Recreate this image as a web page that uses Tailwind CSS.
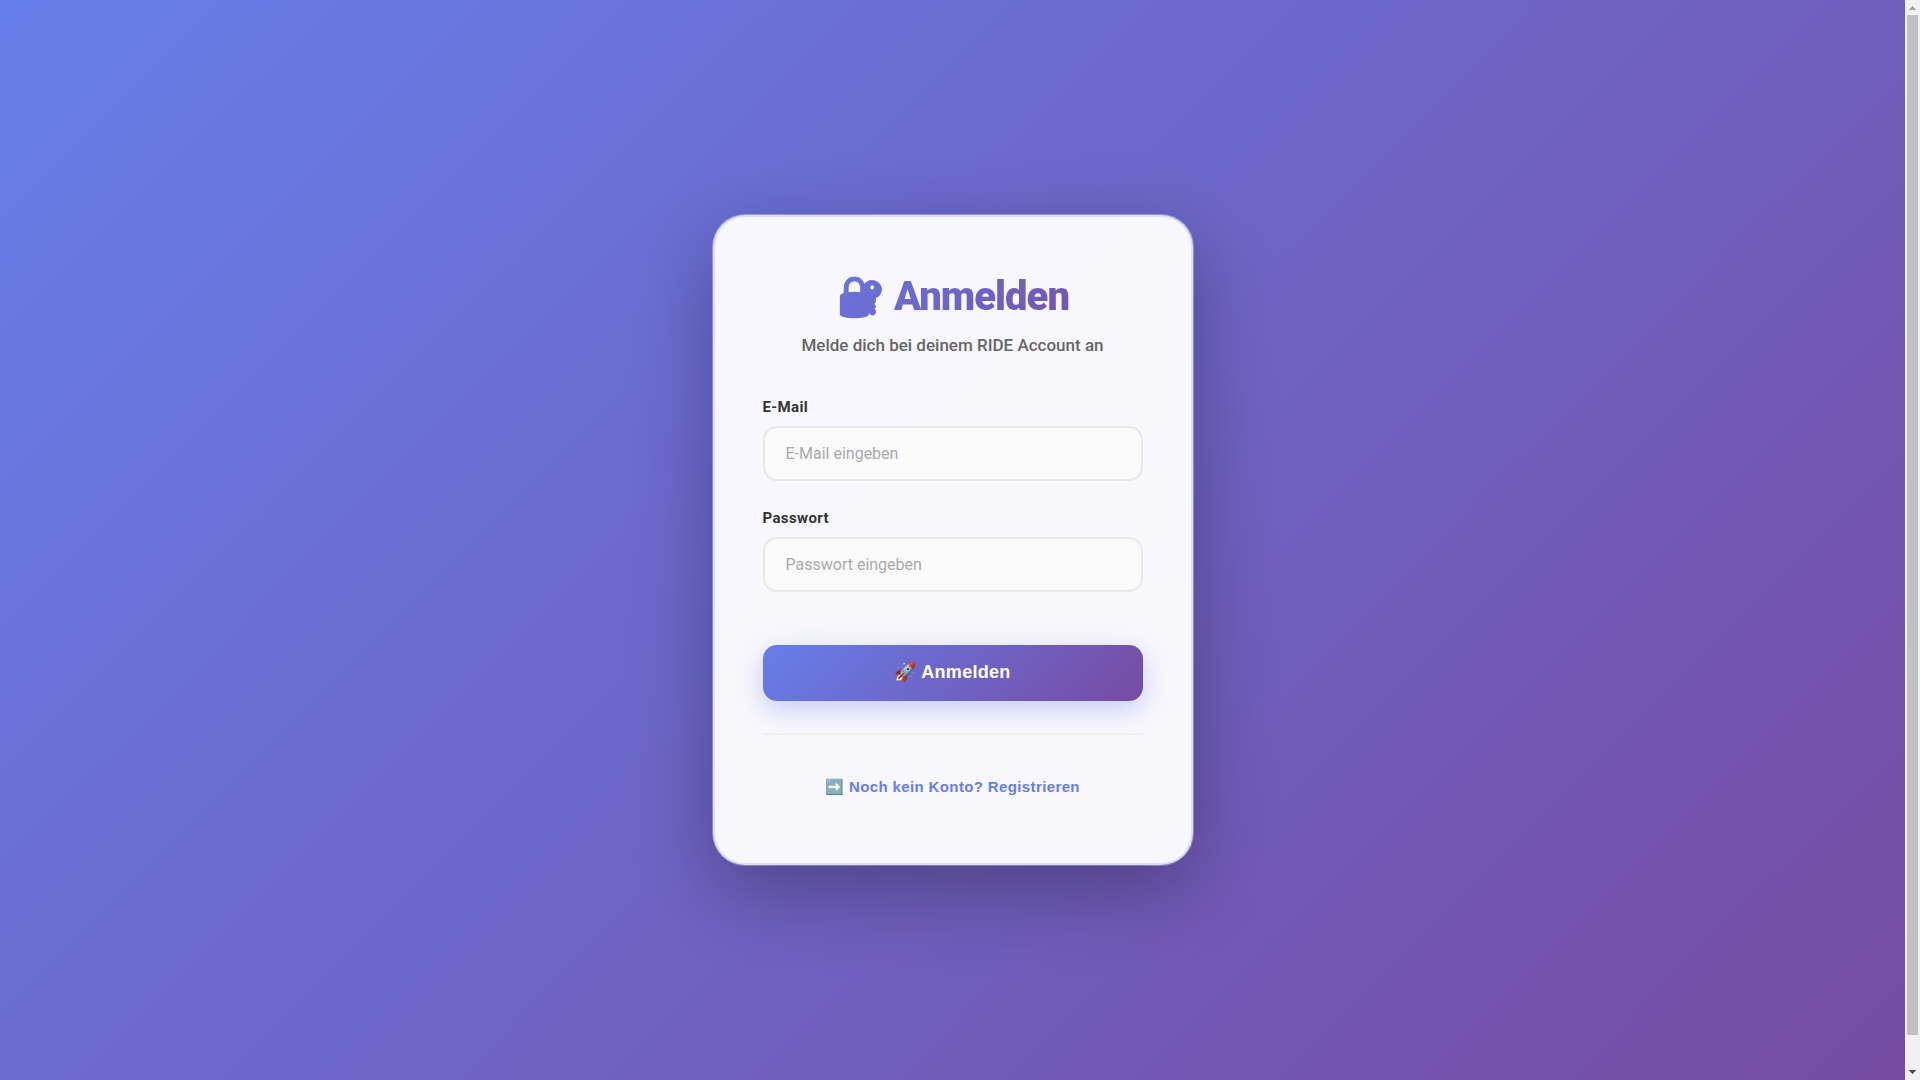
<!DOCTYPE html>
<html lang="de">
  <head>
    <meta charset="UTF-8" />
    <meta name="viewport" content="width=device-width, initial-scale=1.0" />
    <title>Anmelden</title>
    <script src="https://cdn.jsdelivr.net/npm/@tailwindcss/browser@4"></script>
  </head>
  <body class="h-screen overflow-hidden flex bg-[#f1f1f1] font-['Roboto',sans-serif]">
    <main
      class="flex-1 flex items-center justify-center p-5 bg-[linear-gradient(135deg,#667eea_0%,#764ba2_100%)]"
    >
      <div
        class="w-full max-w-[480px] bg-white/95 border-2 border-[#667eea]/20 rounded-[32px] px-12 pt-[50px] pb-14 shadow-[0_25px_80px_rgba(0,0,0,0.3),0_0_0_1px_rgba(255,255,255,0.4)]"
      >
        <h1
          class="text-center text-[40px] leading-[60px] font-black tracking-[-1px] text-transparent bg-clip-text bg-[linear-gradient(135deg,#667eea_0%,#764ba2_100%)]"
        >
          🔐 Anmelden
        </h1>
        <p class="mt-[6px] text-center text-[17px] leading-6 font-medium text-[#666]">
          Melde dich bei deinem RIDE Account an
        </p>

        <form class="mt-[38px]">
          <label for="email" class="block text-[15px] leading-6 font-bold tracking-wide text-[#333]">E-Mail</label>
          <input
            type="email"
            id="email"
            placeholder="E-Mail eingeben"
            class="mt-[7px] w-full h-[55px] px-[21px] text-base border-2 border-[#e8e8e8] rounded-[14px] bg-[#fafafa] placeholder-[#aaa]"
          />

          <label for="password" class="block mt-[25px] text-[15px] leading-6 font-bold tracking-wide text-[#333]">Passwort</label>
          <input
            type="password"
            id="password"
            placeholder="Passwort eingeben"
            class="mt-[7px] w-full h-[55px] px-[21px] text-base border-2 border-[#e8e8e8] rounded-[14px] bg-[#fafafa] placeholder-[#aaa]"
          />

          <button
            type="submit"
            class="mt-[53px] w-full h-14 pb-[2px] rounded-[14px] font-['Liberation_Sans',sans-serif] text-lg font-bold tracking-[0.3px] text-white bg-[linear-gradient(135deg,#667eea_0%,#764ba2_100%)] shadow-[0_8px_25px_rgba(102,126,234,0.35)]"
          >
            🚀 Anmelden
          </button>
        </form>

        <div class="mt-8 pt-8 border-t-2 border-[#f0f0f0] text-center">
          <a
            href="#"
            class="inline-block p-2 font-['Liberation_Sans',sans-serif] text-[15px] leading-6 font-bold tracking-wide text-[#667eea]"
          >
            ➡️ Noch kein Konto? Registrieren
          </a>
        </div>
      </div>
    </main>

    <!-- scrollbar -->
    <div class="w-[15px] flex flex-col items-center" aria-hidden="true">
      <svg class="w-[15px] h-[15px]" viewBox="0 0 15 15" shape-rendering="crispEdges">
        <path d="M7 6h1v1h1v1h1v1h1v1H4V9h1V8h1V7h1z" fill="#a3a3a3" />
      </svg>
      <div class="flex-1 w-[11px] pb-[30px]"><div class="h-full bg-[#c1c1c1]"></div></div>
      <svg class="w-[15px] h-[15px]" viewBox="0 0 15 15" shape-rendering="crispEdges">
        <path d="M4 5h7v1h-1v1H9v1H8v1H7V8H6V7H5V6H4z" fill="#505050" />
      </svg>
    </div>
  </body>
</html>
